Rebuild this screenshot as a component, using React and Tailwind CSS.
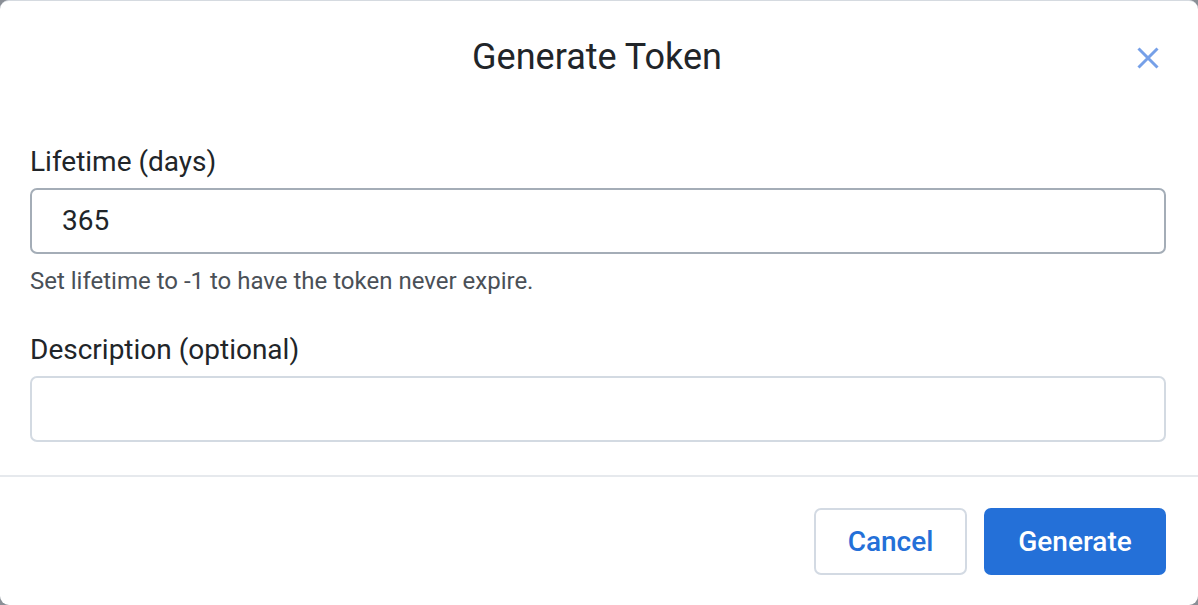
import React from "react";

export default function App() {
  return (
    <div className="w-[1198px] h-[605px] bg-[#8a8f96] overflow-hidden" style={{ fontFamily: "Roboto, 'Liberation Sans', sans-serif" }}>
      <div className="w-[1198px] h-[605px] bg-white rounded-[9px] border-t border-[#d5dae0] flex flex-col">
        <div className="relative flex justify-center pt-[38px] h-[143px] items-start">
          <h1 className="mr-[4px] text-[36px] leading-[36px] text-[#212529] font-normal">Generate Token</h1>
          <button className="absolute right-[38px] top-[45px] w-[24px] h-[24px] flex items-center justify-center">
            <svg width="24" height="24" viewBox="0 0 24 24">
              <path d="M2.5 2.5 L21.5 21.5 M21.5 2.5 L2.5 21.5" stroke="#76a0e8" strokeWidth="3" strokeLinecap="butt" fill="none" />
            </svg>
          </button>
        </div>
        <div className="pl-[30px] pr-[32px] pb-[33px] flex flex-col">
          <label className="text-[28px] leading-[36px] text-[#212529]">Lifetime (days)</label>
          <div className="mt-[8px] h-[66px] border-[2px] border-[#a4adb7] rounded-[7px] flex items-center pl-[30px] text-[28px] text-[#212529]">
            365
          </div>
          <p className="mt-[12px] text-[24px] leading-[30px] text-[#4a5057]">Set lifetime to -1 to have the token never expire.</p>
          <label className="mt-[36px] text-[28px] leading-[36px] text-[#212529]">Description (optional)</label>
          <div className="mt-[8px] h-[66px] border-[2px] border-[#d3dae2] rounded-[7px]"></div>
        </div>
        <div className="border-t-[2px] border-[#e6e9ed] flex justify-end items-start gap-[17px] pt-[31px] pr-[32px]">
          <button className="w-[153px] h-[67px] border-[2px] border-[#d3dae3] rounded-[7px] text-[#2470d8] text-[28px] font-medium bg-white">Cancel</button>
          <button className="w-[182px] h-[67px] rounded-[7px] bg-[#2470d8] text-white text-[28px] font-medium">Generate</button>
        </div>
      </div>
    </div>
  );
}
